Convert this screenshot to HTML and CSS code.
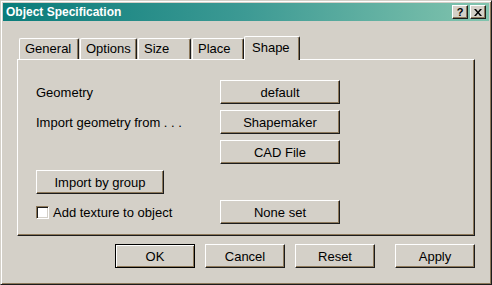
FILE: index.html
```html
<!DOCTYPE html>
<html lang="en">
<head>
    <meta charset="UTF-8">
    <title>Object Specification</title>
    <link rel="stylesheet" href="styles.css">
</head>
<body>
    <div class="window">
        <div class="titlebar">
            <span class="title">Object Specification</span>
            <div class="caption-buttons">
                <button class="caption-btn">?</button>
                <button class="caption-btn close">
                    <svg width="8" height="7" viewBox="0 0 8 7"><path d="M0 0h2l2 2.5L6 0h2L5 3.5 8 7H6L4 4.5 2 7H0l3-3.5z" fill="#000"/></svg>
                </button>
            </div>
        </div>

        <div class="content">
            <div class="tabs">
                <div class="tab tab-general">General</div>
                <div class="tab tab-options">Options</div>
                <div class="tab tab-size">Size</div>
                <div class="tab tab-place">Place</div>
                <div class="tab tab-shape selected">Shape</div>
            </div>

            <div class="panel">
                <div class="form-grid">
                    <div class="label">Geometry</div>
                    <button class="btn wide">default</button>

                    <div class="label">Import geometry from . . .</div>
                    <button class="btn wide">Shapemaker</button>

                    <div></div>
                    <button class="btn wide">CAD File</button>

                    <div class="label"><button class="btn group">Import by group</button></div>
                    <div></div>

                    <label class="label check">
                        <span class="checkbox"></span>
                        Add texture to object
                    </label>
                    <button class="btn wide">None set</button>
                </div>
            </div>

            <div class="footer">
                <button class="btn action default">OK</button>
                <button class="btn action">Cancel</button>
                <button class="btn action">Reset</button>
                <button class="btn action apply">Apply</button>
            </div>
        </div>
    </div>
</body>
</html>
```

FILE: styles.css
```css
body {
    margin: 0;
    font-family: "Liberation Sans", Arial, sans-serif;
    font-size: 13px;
    color: #000;
}
.window {
    width: 492px;
    height: 285px;
    box-sizing: border-box;
    background-color: #d4d0c8;
    border: 1px solid #d4d0c8;
    border-right-color: #1c1c1c;
    border-bottom-color: #1c1c1c;
    box-shadow: inset 1px 1px 0 #ffffff, inset -1px -1px 0 #8c785a;
    padding: 2px;
}
.titlebar {
    height: 18px;
    display: flex;
    align-items: center;
    justify-content: space-between;
    padding: 0 3px 0 3px;
    background: linear-gradient(to right, #0a7c7a, #3d9a94 50%, #82c4ae);
}
.title {
    color: #fff;
    font-weight: bold;
    font-size: 12px;
}
.caption-buttons {
    display: flex;
    gap: 1px;
}
.caption-btn {
    width: 16px;
    height: 14px;
    box-sizing: border-box;
    padding: 0;
    display: flex;
    align-items: center;
    justify-content: center;
    background-color: #d4d0c8;
    border: 1px solid #ffffff;
    border-right-color: #1c1c1c;
    border-bottom-color: #1c1c1c;
    box-shadow: inset -1px -1px 0 #8c785a;
    font-family: "Liberation Sans", Arial, sans-serif;
    font-size: 11px;
    font-weight: bold;
    line-height: 1;
}
.caption-btn.close {
    margin-left: 1px;
}
.content {
    padding: 0 14px;
}
.tabs {
    display: flex;
    align-items: flex-end;
    margin-top: 15px;
    padding-left: 2px;
}
.tab {
    height: 21px;
    box-sizing: border-box;
    margin-right: 1px;
    padding-left: 5px;
    line-height: 20px;
    border-top: 1px solid #ffffff;
    border-left: 1px solid #ffffff;
    border-right: 1px solid #1c1c1c;
    box-shadow: inset -1px 0 0 #8c785a;
    border-top-left-radius: 2px;
    border-top-right-radius: 2px;
}
.tab-general { width: 60px; }
.tab-options { width: 57px; }
.tab-size { width: 53px; }
.tab-place { width: 52px; }
.tab-shape { width: 56px; }
.tab.selected {
    height: 24px;
    margin-left: -1px;
    margin-bottom: -1px;
    padding-left: 7px;
    line-height: 22px;
    position: relative;
    z-index: 1;
    background-color: #d4d0c8;
}
.panel {
    height: 177px;
    box-sizing: border-box;
    border: 1px solid #ffffff;
    border-right-color: #1c1c1c;
    border-bottom-color: #1c1c1c;
    box-shadow: inset -1px -1px 0 #8c785a;
    padding: 20px 0 0 18px;
}
.form-grid {
    display: grid;
    grid-template-columns: 184px 120px;
    grid-auto-rows: 24px;
    row-gap: 6px;
}
.label {
    display: flex;
    align-items: center;
}
.check {
    gap: 4px;
}
.checkbox {
    width: 13px;
    height: 13px;
    box-sizing: border-box;
    background-color: #fff;
    border: 1px solid #8c785a;
    border-right-color: #ffffff;
    border-bottom-color: #ffffff;
    box-shadow: inset 1px 1px 0 #1c1c1c, inset -1px -1px 0 #d4d0c8;
}
.btn {
    height: 24px;
    box-sizing: border-box;
    padding: 0;
    background-color: #d4d0c8;
    border: 1px solid #ffffff;
    border-right-color: #1c1c1c;
    border-bottom-color: #1c1c1c;
    box-shadow: inset -1px -1px 0 #8c785a;
    font-family: "Liberation Sans", Arial, sans-serif;
    font-size: 13px;
    color: #000;
}
.wide {
    width: 120px;
}
.group {
    width: 128px;
}
.footer {
    display: flex;
    justify-content: flex-end;
    gap: 10px;
    margin-top: 8px;
}
.action {
    width: 80px;
}
.action.default {
    border-color: #000;
    box-shadow: inset 1px 1px 0 #ffffff, inset -1px -1px 0 #8c785a;
}
.action.apply {
    margin-left: 10px;
}
```
